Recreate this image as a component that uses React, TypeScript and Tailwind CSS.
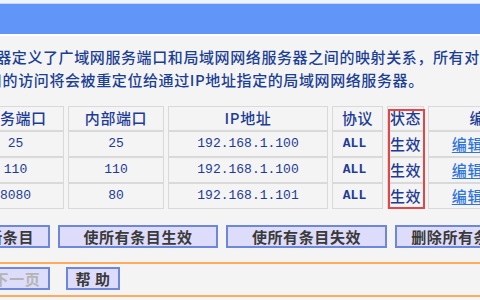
import React from 'react';

const CJK = "font-['Noto_Sans_CJK_SC',sans-serif]";
const MONO = "font-['Liberation_Mono','Noto_Sans_CJK_SC',monospace]";

const ROWS = [
  { ext: '25', internal: '25', ip: '192.168.1.100', proto: 'ALL', status: '生效' },
  { ext: '110', internal: '110', ip: '192.168.1.100', proto: 'ALL', status: '生效' },
  { ext: '8080', internal: '80', ip: '192.168.1.101', proto: 'ALL', status: '生效' },
];

const Btn: React.FC<{ w: string; children: React.ReactNode; disabled?: boolean }> = ({ w, children, disabled }) => (
  <button
    className={`${w} h-[23px] shrink-0 border-2 border-[#6d87da] bg-[#dedcfb] text-[15px] leading-none tracking-[0.6px] font-semibold ${
      disabled ? 'text-[#b4b4b4]' : 'text-[#3a3a3a]'
    }`}
  >
    {children}
  </button>
);

export default function App() {
  return (
    <div className={`relative w-[480px] h-[300px] overflow-hidden bg-[#f4f4f4] ${CJK}`}>
      {/* title bar */}
      <div className="h-[3px] bg-[#eef2fb]" />
      <div className="h-px bg-[#c9d6f0]" />
      <div className="h-[30px] bg-[#6195f8]" />
      <div className="h-[2px] bg-white" />

      {/* intro */}
      <div className="mt-[9px] text-[15px] leading-[23px] tracking-[0.6px] text-[#1c3f94] font-medium whitespace-nowrap">
        <div className="-ml-[35px]">服务器定义了广域网服务端口和局域网网络服务器之间的映射关系，所有对该广域网</div>
        <div className="-ml-[13px]">口的访问将会被重定位给通过IP地址指定的局域网网络服务器。</div>
      </div>

      {/* table */}
      <table className="mt-[15px] -ml-[37px] table-fixed w-[583px] border-separate border-spacing-x-[4px] border-spacing-y-0 text-[15px] text-[#1e3c96]">
        <thead>
          <tr>
            {[
              ['服务端口', 'w-[97px]'],
              ['内部端口', 'w-[96px]'],
              ['IP地址', 'w-[160px]'],
              ['协议', 'w-[51px]'],
              ['状态', 'w-[37px]'],
              ['编辑', 'w-[114px]'],
            ].map(([t, w]) => (
              <th key={t} className={`${w} h-[25px] p-0 border border-[#d9d9d9] font-medium tracking-[0.6px]`}>
                {t}
              </th>
            ))}
          </tr>
        </thead>
        <tbody>
          {ROWS.map((r, i) => (
            <tr key={i}>
              <td className={`h-[26px] p-0 border border-[#d9d9d9] text-center text-[13px] ${MONO}`}>{r.ext}</td>
              <td className={`h-[26px] p-0 border border-[#d9d9d9] text-center text-[13px] ${MONO}`}>{r.internal}</td>
              <td className={`h-[26px] p-0 border border-[#d9d9d9] text-center text-[13px] ${MONO}`}>{r.ip}</td>
              <td className={`h-[26px] p-0 pr-[6px] border border-[#d9d9d9] text-center text-[13px] font-bold ${MONO}`}>{r.proto}</td>
              <td className="h-[26px] p-0 border border-[#d9d9d9] text-center font-medium tracking-[0.6px]">{r.status}</td>
              <td className="h-[26px] p-0 border border-[#d9d9d9] text-center tracking-[0.6px]">
                <a className="text-[#2f74d8] underline underline-offset-2 font-medium">编辑</a>{' '}
                <a className="text-[#2f74d8] underline underline-offset-2 font-medium">删除</a>
              </td>
            </tr>
          ))}
        </tbody>
      </table>

      {/* highlight box on status column */}
      <div className="absolute left-[388px] top-[109px] w-[37px] h-[100px] border-2 border-[#e64545]" />

      {/* action buttons */}
      <div className="mt-[16px] -ml-[60px] flex gap-[8px]">
        <Btn w="w-[110px]">添加新条目</Btn>
        <Btn w="w-[160px]">使所有条目生效</Btn>
        <Btn w="w-[161px]">使所有条目失效</Btn>
        <Btn w="w-[126px]">删除所有条目</Btn>
      </div>

      <div className="mt-[14px] h-[2px] bg-[#ffab5c]" />

      <div className="mt-[3px] -ml-[16px] flex gap-[16px]">
        <Btn w="w-[66px]" disabled>下一页</Btn>
        <Btn w="w-[54px]">帮 助</Btn>
      </div>

      <div className="mt-[5px] h-[2px] bg-[#ffab5c]" />
    </div>
  );
}
